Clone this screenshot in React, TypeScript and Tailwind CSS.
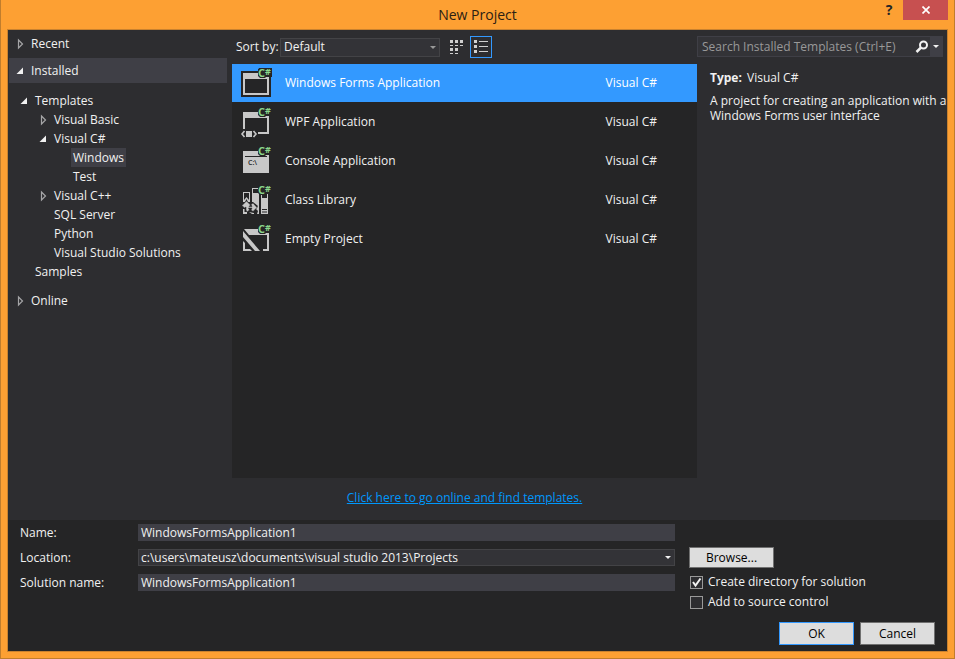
import React, { useState } from "react";
import clsx from "clsx";

type TreeItem = {
  label: string;
  indent: string;
  state?: "open" | "closed";
  selected?: boolean;
};

const treeItems: TreeItem[] = [
  { label: "Templates", indent: "pl-[11px]", state: "open" },
  { label: "Visual Basic", indent: "pl-[30px]", state: "closed" },
  { label: "Visual C#", indent: "pl-[30px]", state: "open" },
  { label: "Windows", indent: "pl-[49px]", selected: true },
  { label: "Test", indent: "pl-[49px]" },
  { label: "Visual C++", indent: "pl-[30px]", state: "closed" },
  { label: "SQL Server", indent: "pl-[30px]" },
  { label: "Python", indent: "pl-[30px]" },
  { label: "Visual Studio Solutions", indent: "pl-[30px]" },
  { label: "Samples", indent: "pl-[11px]" },
];

const Expander = ({ state }: { state?: "open" | "closed" }) => (
  <svg width="16" height="12" viewBox="0 0 16 12" className="shrink-0" aria-hidden="true">
    {state === "open" && <path d="M8 2.5V9H1.5z" fill="#f1f1f1" />}
    {state === "closed" && (
      <path d="M3.5 2v8L7.500 6z" fill="none" stroke="#a5a5a7" strokeWidth="1.2" />
    )}
  </svg>
);

const Arrow = ({ className }: { className: string }) => (
  <svg width="6" height="3" viewBox="0 0 6 3" className={className} aria-hidden="true">
    <path d="M0 0h6L3 3z" fill="currentColor" />
  </svg>
);

const Badge = () => (
  <>
    <path d="M19 1h13v9h-6l-1 1h-5l-2-2V3z" fill="#252526" />
    <text x="18" y="10" fill="#8bd78b" fontSize="11" fontWeight="700" fontFamily="Open Sans, sans-serif">
      C
      <tspan x="25" y="8" fontSize="9">
        #
      </tspan>
    </text>
  </>
);

const FormsIcon = () => (
  <>
    <path d="M1 4h17V2h13v28H1z" fill="#252526" />
    <path d="M3 6h26v22H3zM5 12v14h22V12z" fill="#c8c8c8" fillRule="evenodd" />
  </>
);

const WpfIcon = () => (
  <>
    <path d="M3 6h26v22H18v-2h9V12H5v11H3z" fill="#c8c8c8" />
    <path d="M6 25h6v6H6z" fill="#c8c8c8" />
    <path d="M4.500 25L2 28l2.500 3M13.500 25l2.500 3-2.500 3" fill="none" stroke="#c8c8c8" strokeWidth="1.600" />
  </>
);

const ConsoleIcon = () => (
  <>
    <path d="M3 6h26v22H3z" fill="#c8c8c8" />
    <path d="M5 11h22v1H5z" fill="#252526" />
    <text x="8" y="20" fontSize="7" fontWeight="600" fontFamily="Open Sans, sans-serif" fill="#252526">
      C:\
    </text>
  </>
);

const LibraryIcon = () => (
  <>
    <path d="M3 8h7v10H8l-1.500-3L5 18H3zM4 9v7l2.500-3L9 16V9z" fill="#c8c8c8" fillRule="evenodd" />
    <path d="M12 4h7v26h-2l1-3-2-2 2-3-5-4h-1zM13 5v4h5V5z" fill="#c8c8c8" fillRule="evenodd" />
    <path d="M21 10h7v20h-7zM22 10v4h5v-4zM22 25v1h5v-1zM22 27.500v1h5v-1z" fill="#c8c8c8" fillRule="evenodd" />
    <path
      d="M6.500 17l4 4-1.500 1.500h3l-1-2 2-1.500 4 4.500-4 4-2-1.500 1-2H8.500l1 2L7 28l-1-2v-3l-1.500 1L2 21.500z"
      fill="#c8c8c8"
      stroke="#252526"
      strokeWidth="0.5"
    />
    <path d="M3 25h1.500v3H7v2H3zM9 28l3 2h2v-1z" fill="#c8c8c8" />
  </>
);

const EmptyIcon = () => (
  <>
    <path d="M4 6h25v22h-6v-2h4V12H9z" fill="#c8c8c8" />
    <path d="M3 8l17 20h-5L3 14z" fill="#c8c8c8" />
    <path d="M3 18l2 2v6h5l2 2H3z" fill="#c8c8c8" />
  </>
);

const templates = [
  { name: "Windows Forms Application", Icon: FormsIcon },
  { name: "WPF Application", Icon: WpfIcon },
  { name: "Console Application", Icon: ConsoleIcon },
  { name: "Class Library", Icon: LibraryIcon },
  { name: "Empty Project", Icon: EmptyIcon },
];

const TitleBar = () => (
  <header className="relative h-[29px] flex items-center justify-center">
    <h1 className="text-[14px] text-[#2b2014]">New Project</h1>
    <div className="absolute top-0 right-0 flex h-5">
      <button aria-label="Help" className="w-7 text-[14px] leading-5 font-bold text-[#252526]">
        ?
      </button>
      <button aria-label="Close" className="w-[45px] flex items-center justify-center bg-[#c75050]">
        <svg width="8" height="8" viewBox="0 0 8 8" aria-hidden="true">
          <path d="M0.500 0.500l7 7M7.500 0.500l-7 7" stroke="#fff" strokeWidth="1.700" />
        </svg>
      </button>
    </div>
  </header>
);

const Sidebar = () => (
  <nav className="w-56 shrink-0">
    <button className="w-full h-7 pl-[7px] flex items-center">
      <Expander state="closed" />
      Recent
    </button>
    <button className="w-[218px] h-[25px] ml-px pl-[6px] flex items-center bg-[#3f3f46]">
      <Expander state="open" />
      Installed
    </button>
    <ul className="pt-2 pb-1.5">
      {treeItems.map((item) => (
        <li key={item.label}>
          <button className={clsx("w-full h-[19px] flex items-center", item.indent)}>
            <Expander state={item.state} />
            <span className={clsx("-mx-0.5 px-0.5 leading-[19px]", item.selected && "bg-[#3f3f46]")}>
              {item.label}
            </span>
          </button>
        </li>
      ))}
    </ul>
    <button className="w-full h-7 pl-[7px] flex items-center">
      <Expander state="closed" />
      Online
    </button>
  </nav>
);

const Toolbar = () => (
  <div className="h-[34px] pl-1 flex items-center">
    <label htmlFor="sort" className="w-11 whitespace-nowrap">
      Sort by:
    </label>
    <div className="relative">
      <select
        id="sort"
        className="block appearance-none w-40 h-[19px] px-[3px] border border-[#434346] bg-[#333337] leading-4"
      >
        <option>Default</option>
      </select>
      <Arrow className="absolute right-1 top-2 text-[#999999] pointer-events-none" />
    </div>
    <button aria-label="Medium icons" className="ml-1.5 w-[22px] h-[22px] flex items-center justify-center">
      <svg width="14" height="14" viewBox="0 0 14 14" fill="#d0d0d0" aria-hidden="true">
        <path d="M0 0h3v3H0zM5 0h3v3H5zM10 0h3v3h-3zM0 5h3v1H0zM5 5h3v1H5zM10 5h3v1h-3zM0 8h3v3H0zM5 8h3v3H5zM0 13h3v1H0zM5 13h3v1H5z" />
      </svg>
    </button>
    <button
      aria-label="Small icons"
      className="ml-0.5 w-[22px] h-[22px] flex items-center justify-center border border-[#3399ff]"
    >
      <svg width="14" height="14" viewBox="0 0 14 14" fill="#d0d0d0" aria-hidden="true">
        <path d="M0 0h3v3H0zM5 1h9v1H5zM0 5h3v3H0zM5 6h9v1H5zM0 10h3v3H0zM5 11h9v1H5z" />
      </svg>
    </button>
  </div>
);

const TemplateList = () => {
  const [selected, setSelected] = useState(0);

  return (
    <ul className="flex-1 bg-[#252526]">
      {templates.map(({ name, Icon }, i) => (
        <li key={name} className="pb-px">
          <button
            onClick={() => setSelected(i)}
            className={clsx(
              "w-full h-[38px] pl-2 pr-10 flex items-center text-left",
              i === selected && "bg-[#3399ff] text-white"
            )}
          >
            <svg width="32" height="32" viewBox="0 0 32 32" className="shrink-0 overflow-visible" aria-hidden="true">
              <Icon />
              <Badge />
            </svg>
            <span className="ml-[13px] flex-1">{name}</span>
            <span>Visual C#</span>
          </button>
        </li>
      ))}
    </ul>
  );
};

const Details = () => (
  <aside className="w-[250px] shrink-0 pt-1.5">
    <div className="mr-1 h-[21px] flex items-center border border-[#3f3f46] bg-[#333337]">
      <input
        type="text"
        aria-label="Search Installed Templates"
        placeholder="Search Installed Templates (Ctrl+E)"
        className="flex-1 min-w-0 pl-1 bg-transparent outline-none placeholder:text-[#999999]"
      />
      <button aria-label="Search" className="w-4 flex justify-center">
        <svg width="14" height="14" viewBox="0 0 14 14" fill="none" stroke="#f1f1f1" aria-hidden="true">
          <circle cx="8.500" cy="5" r="3.500" strokeWidth="2" />
          <path d="M6 7.500L1.500 12" strokeWidth="2.500" />
        </svg>
      </button>
      <button aria-label="Search options" className="w-3 h-full flex items-center justify-center bg-[#3f3f46]">
        <Arrow className="text-[#f1f1f1]" />
      </button>
    </div>
    <div className="pl-[13px] pt-3">
      <p className="leading-[18px]">
        <b className="mr-0.5">Type:</b> Visual C#
      </p>
      <p className="mt-1.5 leading-[15px]">
        A project for creating an application with a Windows Forms user interface
      </p>
    </div>
  </aside>
);

const Check = ({ id, label, checked }: { id: string; label: string; checked?: boolean }) => (
  <div className="h-5 pl-px flex items-center">
    <span className="relative">
      <input
        id={id}
        type="checkbox"
        defaultChecked={checked}
        className="peer block appearance-none w-[13px] h-[13px] border border-[#999999] bg-[#2d2d30]"
      />
      <svg
        width="13"
        height="13"
        viewBox="0 0 13 13"
        className="absolute inset-0 hidden peer-checked:block pointer-events-none"
        aria-hidden="true"
      >
        <path d="M3 6l2.500 3.500L10.500 2.500" fill="none" stroke="#f1f1f1" strokeWidth="2" />
      </svg>
    </span>
    <label htmlFor={id} className="ml-[5px]">
      {label}
    </label>
  </div>
);

const Footer = () => (
  <footer className="pt-1 px-3 pb-1.5 bg-[#252526]">
    <div className="flex">
      <div className="flex-1 grid grid-cols-[118px_1fr] auto-rows-[17px] gap-y-2 items-center">
        <label htmlFor="name">Name:</label>
        <input id="name" defaultValue="WindowsFormsApplication1" className="h-[17px] px-[3px] bg-[#3f3f46] outline-none" />
        <label htmlFor="location">Location:</label>
        <div className="relative">
          <select
            id="location"
            className="block appearance-none w-full h-[17px] px-0.5 border border-[#434346] bg-[#333337] leading-[15px]"
          >
            <option>c:\users\mateusz\documents\visual studio 2013\Projects</option>
          </select>
          <Arrow className="absolute right-1 top-[7px] text-[#f1f1f1] pointer-events-none" />
        </div>
        <label htmlFor="solution">Solution name:</label>
        <input id="solution" defaultValue="WindowsFormsApplication1" className="h-[17px] px-[3px] bg-[#3f3f46] outline-none" />
      </div>
      <div className="w-[246px] ml-[14px] pt-[23px]">
        <button className="block w-[85px] h-[21px] mb-1 border border-[#707070] bg-[#dddddd] text-black leading-[19px]">
          Browse...
        </button>
        <Check id="create-dir" label="Create directory for solution" checked />
        <Check id="source-control" label="Add to source control" />
      </div>
    </div>
    <div className="mt-[10px] flex justify-end gap-1.5">
      <button className="w-[75px] h-[23px] border border-[#3399ff] bg-[#dddddd] text-black">OK</button>
      <button className="w-[75px] h-[23px] border border-[#707070] bg-[#dddddd] text-black">Cancel</button>
    </div>
  </footer>
);

const App = () => {
  return (
    <div className="min-h-screen flex flex-col px-1.5 pb-1.5 border-x border-b border-[#c07d2d] bg-[#fda033] font-['Open_Sans',sans-serif] text-[12px] leading-4">
      <TitleBar />
      <main className="flex-1 flex flex-col border border-[#c9822f] bg-[#2d2d30] text-[#f1f1f1]">
        <div className="flex-1 flex">
          <Sidebar />
          <section className="flex-1 flex flex-col">
            <Toolbar />
            <TemplateList />
            <div className="h-[42px] pb-0.5 flex items-center justify-center">
              <a href="#" className="text-[#0097fb] underline">
                Click here to go online and find templates.
              </a>
            </div>
          </section>
          <Details />
        </div>
        <Footer />
      </main>
    </div>
  );
};

export default App;
